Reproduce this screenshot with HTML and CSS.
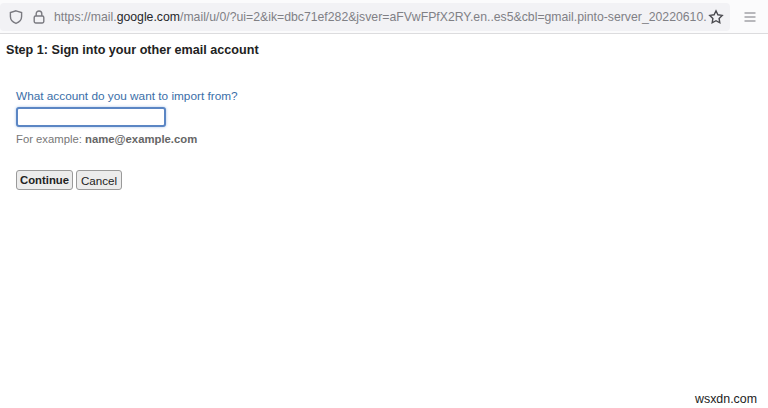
FILE: index.html
```html
<!DOCTYPE html>
<html lang="en">
<head>
  <meta charset="UTF-8">
  <title>Step 1</title>
  <link rel="stylesheet" href="styles.css">
</head>
<body>

  <div class="toolbar">
    <div class="urlbar">
      <svg class="icon shield" viewBox="0 0 16 16" width="16" height="16">
        <path d="M8 1.8 L13.6 3.6 V7.6 C13.6 11 11 13.4 8 14.4 C5 13.4 2.4 11 2.4 7.6 V3.6 Z"/>
      </svg>
      <svg class="icon lock" viewBox="0 0 16 16" width="16" height="16">
        <rect x="3.2" y="7" width="9.6" height="7" rx="1.4"/>
        <path d="M5.2 7 V4.8 C5.2 3.2 6.4 2 8 2 C9.6 2 10.8 3.2 10.8 4.8 V7"/>
      </svg>
      <div class="url">https://mail.<b>google.com</b>/mail/u/0/?ui=2&amp;ik=dbc71ef282&amp;jsver=aFVwFPfX2RY.en..es5&amp;cbl=gmail.pinto-server_20220610.</div>
      <svg class="icon star" viewBox="0 0 16 16" width="16" height="16">
        <path d="M8 1.8 L9.9 5.8 L14.2 6.4 L11.1 9.4 L11.8 13.8 L8 11.7 L4.2 13.8 L4.9 9.4 L1.8 6.4 L6.1 5.8 Z"/>
      </svg>
    </div>
    <svg class="icon menu" viewBox="0 0 12 10" width="12" height="10">
      <path d="M0.5 1 H11.5 M0.5 5 H11.5 M0.5 9 H11.5"/>
    </svg>
  </div>

  <h1 class="step-title">Step 1: Sign into your other email account</h1>

  <form class="import-form">
    <label class="field-label" for="account">What account do you want to import from?</label>
    <input class="field-input" id="account" type="text">
    <p class="hint">For example: <b>name@example.com</b></p>
    <div class="buttons">
      <button class="btn btn-default" type="button">Continue</button>
      <button class="btn" type="button">Cancel</button>
    </div>
  </form>

  <div class="watermark">wsxdn.com</div>

</body>
</html>
```

FILE: styles.css
```css
body {
  margin: 0;
  height: 408px;
  overflow: hidden;
  background: #fff;
  font-family: "Liberation Sans", Arial, sans-serif;
  color: #222;
  position: relative;
}
.toolbar {
  display: flex;
  align-items: center;
  height: 34px;
  box-sizing: border-box;
  background: #fbfbfc;
  border-bottom: 1px solid #dcdcde;
}
.urlbar {
  display: flex;
  align-items: center;
  width: 730px;
  height: 28px;
  padding-left: 8px;
  box-sizing: border-box;
  background: #f2f2f5;
  border-radius: 4px;
}
.icon {
  flex: none;
  fill: none;
  stroke: #7a7a80;
  stroke-width: 1.4;
}
.lock {
  margin-left: 7px;
}
.url {
  margin-left: 7px;
  flex: 1;
  font-size: 12.25px;
  white-space: nowrap;
  overflow: hidden;
  color: #808085;
}
.url b {
  font-weight: normal;
  color: #26262a;
}
.star {
  margin-right: 6px;
  stroke: #4a4a4f;
}
.menu {
  margin-left: 14px;
  stroke: #77777c;
  stroke-width: 1.2;
}
.step-title {
  margin: 9px 0 0 6px;
  font-size: 12.6px;
  line-height: 15px;
  font-weight: bold;
  color: #222;
}
.import-form {
  display: flex;
  flex-direction: column;
  align-items: flex-start;
  margin: 31px 0 0 16px;
}
.field-label {
  font-size: 11.8px;
  line-height: 14px;
  color: #3a6ea8;
}
.field-input {
  width: 150px;
  height: 20px;
  margin-top: 4px;
  padding: 0;
  box-sizing: border-box;
  background: #fff;
  border: 2px solid #5b86c4;
  border-radius: 3px;
  box-shadow: 0 0 3px #a9c4e8;
  outline: none;
}
.hint {
  margin: 5px 0 0;
  font-size: 11.3px;
  line-height: 14px;
  color: #777;
}
.hint b {
  color: #666;
}
.buttons {
  display: flex;
  gap: 3px;
  margin-top: 24px;
}
.btn {
  height: 20px;
  width: 46px;
  padding: 0;
  font-family: inherit;
  font-size: 11.6px;
  color: #222;
  background: #ececec;
  border: 1px solid #9a9a9a;
  border-radius: 3px;
}
.btn-default {
  width: 57px;
  font-size: 11.3px;
  font-weight: bold;
}
.watermark {
  position: absolute;
  right: 11px;
  top: 392px;
  font-size: 12.4px;
  line-height: 14px;
  color: #222;
}
```
